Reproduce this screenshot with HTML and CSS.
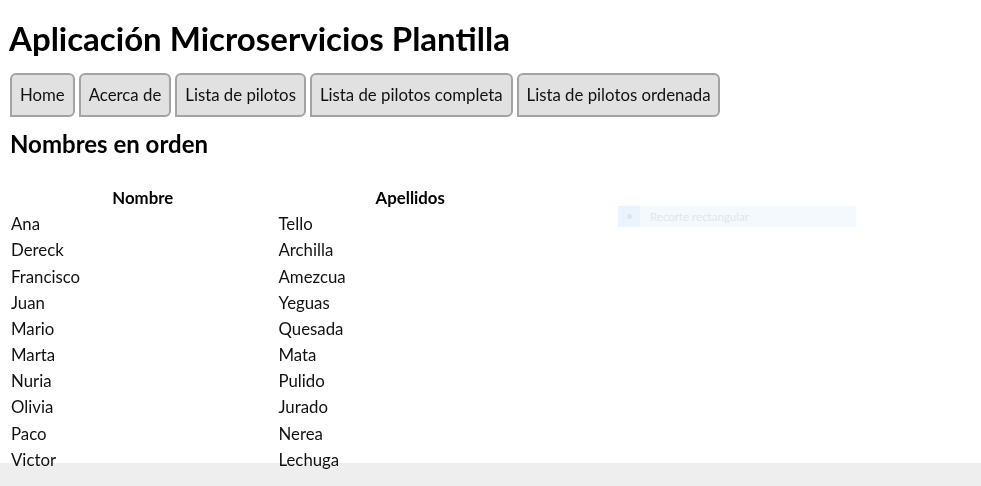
FILE: index.html
```html
<!DOCTYPE html>
<html lang="es">
<head>
<meta charset="utf-8">
<title>Aplicación Microservicios Plantilla</title>
<link rel="stylesheet" href="styles.css">
</head>
<body>
<h1 class="title">Aplicación Microservicios Plantilla</h1>
<nav class="nav">
  <a class="nav-btn" href="#">Home</a>
  <a class="nav-btn" href="#">Acerca de</a>
  <a class="nav-btn" href="#">Lista de pilotos</a>
  <a class="nav-btn" href="#">Lista de pilotos completa</a>
  <a class="nav-btn" href="#">Lista de pilotos ordenada</a>
</nav>
<h2 class="subtitle">Nombres en orden</h2>
<table class="pilots">
  <thead>
    <tr><th class="col">Nombre</th><th class="col">Apellidos</th></tr>
  </thead>
  <tbody>
    <tr><td>Ana</td><td>Tello</td></tr>
    <tr><td>Dereck</td><td>Archilla</td></tr>
    <tr><td>Francisco</td><td>Amezcua</td></tr>
    <tr><td>Juan</td><td>Yeguas</td></tr>
    <tr><td>Mario</td><td>Quesada</td></tr>
    <tr><td>Marta</td><td>Mata</td></tr>
    <tr><td>Nuria</td><td>Pulido</td></tr>
    <tr><td>Olivia</td><td>Jurado</td></tr>
    <tr><td>Paco</td><td>Nerea</td></tr>
    <tr><td>Victor</td><td>Lechuga</td></tr>
  </tbody>
</table>
<div class="snip"><span class="snip-icon"><span class="snip-dot"></span></span><span class="snip-text">Recorte rectangular</span></div>
<footer class="footer"></footer>
</body>
</html>
```
FILE: styles.css
```css
html { background: #fff; }
body {
  margin: 8px;
  font-family: Lato, "Noto Sans", sans-serif;
  font-size: 16.8px;
  color: #111;
}
.title {
  font-size: 33px;
  font-weight: 700;
  margin: 11px 0 14px 1px;
  line-height: 1.2;
  color: #000;
}
.nav {
  display: flex;
  gap: 4px;
  padding-left: 2px;
}
.nav-btn {
  display: block;
  box-sizing: border-box;
  height: 44px;
  line-height: 40px;
  padding: 0 8px;
  border: 2px solid #a3a3a3;
  border-radius: 6px 6px 6px 0;
  background: #e1e1e1;
  color: #111;
  text-decoration: none;
}
.subtitle {
  font-size: 24px;
  font-weight: 700;
  margin: 13px 0 25px 2px;
  line-height: 1.2;
  color: #000;
}
.pilots {
  border-spacing: 2px;
  width: 537px;
}
.pilots th, .pilots td {
  padding: 1px;
  height: 22.2px;
}
.pilots th { font-weight: 700; color: #000; }
.pilots td { text-align: left; }
.col { width: 50%; }
.snip {
  position: absolute;
  left: 618px;
  top: 206px;
  width: 238px;
  height: 21px;
  display: flex;
  align-items: center;
  background: #f4f9fe;
}
.snip-icon {
  width: 22px;
  height: 21px;
  display: flex;
  align-items: center;
  justify-content: center;
  background: #ebf3fd;
}
.snip-dot {
  width: 5px;
  height: 5px;
  border-radius: 50%;
  background: #dfe3ea;
}
.snip-text {
  margin-left: 10px;
  font-size: 11.5px;
  color: #e3e6ea;
}
.footer {
  position: fixed;
  left: 0;
  right: 0;
  bottom: 0;
  height: 23px;
  background: #eeeeee;
  z-index: -1;
}
```
